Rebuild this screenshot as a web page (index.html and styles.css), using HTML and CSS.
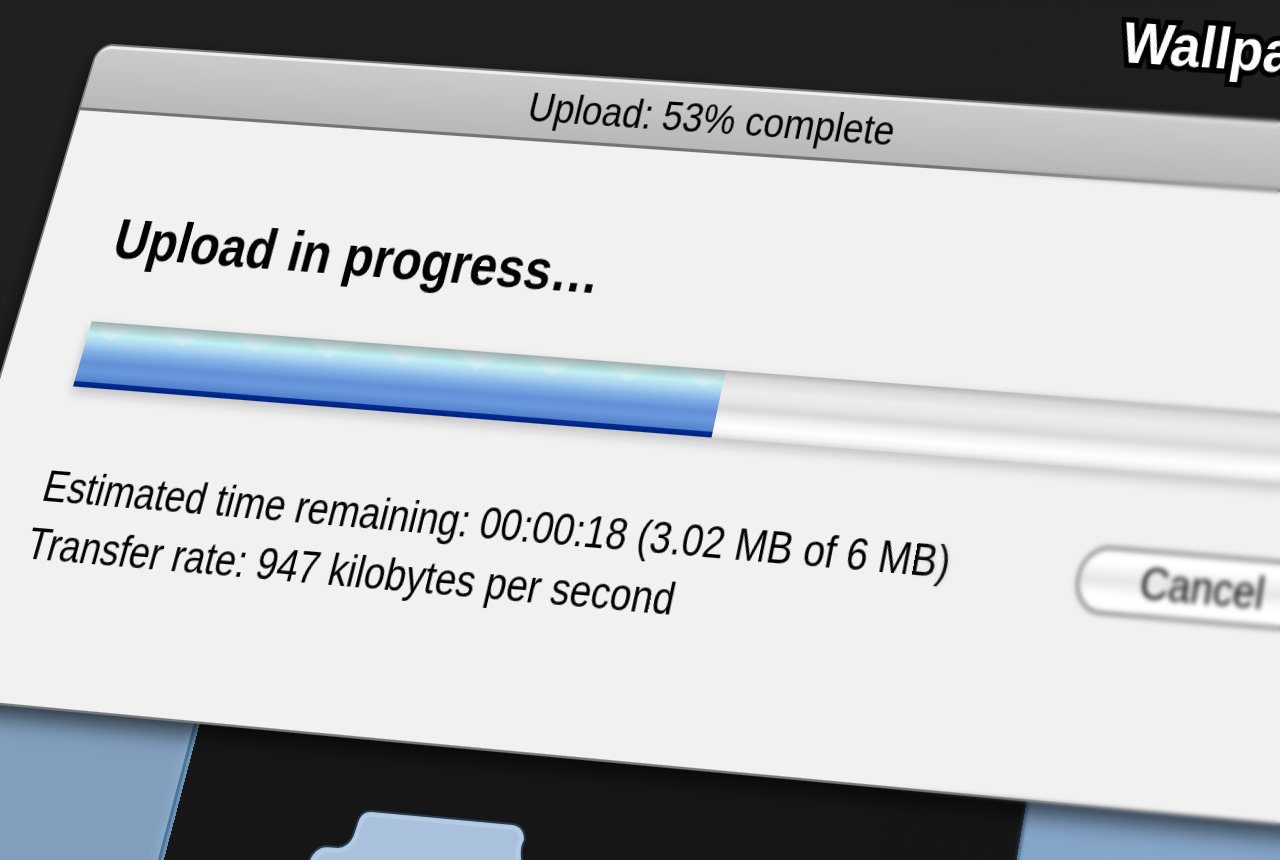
FILE: index.html
```
<!DOCTYPE html>
<html lang="en">
<head>
    <meta charset="UTF-8">
    <meta name="viewport" content="width=device-width, initial-scale=1.0">
    <title>Upload: 53% complete</title>
    <link rel="stylesheet" href="styles.css">
</head>
<body>
    <svg class="folder" viewBox="0 0 240 64" width="240" height="64" aria-hidden="true">
        <path class="folder-edge" d="M6 72 Q12 51 26 50 L38 51 Q48 50 53 39 L58 24 Q62 14 72 15 L213 28 Q225 30 225 44 Q219 54 224 72 Z"/>
        <path class="folder-shine" d="M11 72 Q17 55 28 54 L39 55 Q50 54 56 41 L61 26 Q65 18 73 19 L212 32 Q221 33 221 44 Q215 54 219 72"/>
    </svg>
    <div class="desktop">
        <div class="panel panel-left"></div>
        <div class="panel panel-right"></div>
        <div class="window">
            <div class="titlebar">Upload: 53% complete</div>
            <div class="content">
                <h1 id="heading">Upload in progress…</h1>
                <progress class="bar" value="53" max="100" aria-labelledby="heading"></progress>
                <div class="footer">
                    <div class="details">
                        <div>Estimated time remaining: 00:00:18 (3.02 MB of 6 MB)</div>
                        <div>Transfer rate: 947 kilobytes per second</div>
                    </div>
                    <button class="cancel" type="button">Cancel</button>
                </div>
            </div>
        </div>
    </div>
    <div class="lens"></div>
    <div class="desktop">
        <div class="label">Wallpaper</div>
    </div>
</body>
</html>
```
FILE: styles.css
```
* {
    box-sizing: border-box;
}

body {
    margin: 0;
    height: 100vh;
    overflow: hidden;
    position: relative;
    background: linear-gradient(#202020 30%, #161617 80%);
    font-family: "Liberation Sans", Arial, sans-serif;
    font-size: 39px;
    color: #000;
}

/* everything on the desktop lies on one tilted plane */
.desktop {
    position: absolute;
    top: 0;
    left: 0;
    width: 117vw;
    transform-origin: 0 0;
    transform: matrix3d(
        0.8777, 0.0561, 0, -0.0000374,
        -0.3105, 1.0028, 0, -0.0001182,
        0, 0, 1, 0,
        98, 43, 0, 1);
}

.window {
    position: relative;
    height: 602px;
    border: 2px solid #77787a;
    border-radius: 18px 18px 0 0;
    background: #f1f1f1;
    box-shadow: 0 8px 20px rgba(0, 0, 0, 0.7);
    overflow: hidden;
}

.titlebar {
    height: 64px;
    padding-right: 126px;
    line-height: 58px;
    text-align: center;
    background: linear-gradient(#cbcbcb, #b8b8b8);
    border-top: 3px solid #eee;
    border-bottom: 3px solid #747474;
    border-radius: 16px 16px 0 0;
}

.content {
    padding: 88px 88px 0 80px;
}

h1 {
    margin: 0;
    font-size: 52px;
    line-height: 60px;
}

.bar {
    display: block;
    width: calc(100% - 48px);
    height: 60px;
    margin-top: 48px;
    appearance: none;
    border: none;
    box-shadow: 0 5px 10px rgba(0, 0, 0, 0.2);
}

.bar::-webkit-progress-bar {
    background: linear-gradient(#b2b2b2, #d8d8d8 10%, #ececec 28%, #e8e8e8 42%, #d8d8d8 56%, #f0f0f0 68%, #fff 82%, #f4f4f4 92%, #dadada);
}

.bar::-webkit-progress-value {
    background:
        linear-gradient(rgba(150, 160, 160, 0.8), rgba(220, 230, 230, 0) 18%),
        conic-gradient(from -60deg at 50% 17px, rgba(225, 238, 242, 0.5) 120deg, transparent 0) -15px 0 / 79px 60px repeat-x,
        linear-gradient(#b4e2e0, #c2f0f3 20%, #acd4f0 32%, #84b3e5 45%, #648fd8 62%, #6a98dc 76%, #5380cb 91%, #012c92 92%, #00237f);
}

.footer {
    display: flex;
    justify-content: space-between;
    align-items: flex-start;
    padding-top: 64px;
}

.details {
    line-height: 51px;
    white-space: nowrap;
}

.cancel {
    width: 260px;
    height: 60px;
    padding: 0 10px 0 0;
    border: 5px solid #a8a8a8;
    border-radius: 30px;
    background: linear-gradient(#fff 20%, #e6e6e6 50%, #fff 75%);
    font: inherit;
    color: #111;
    filter: blur(1px);
}

.panel {
    position: absolute;
    top: 450px;
    height: 600px;
    background: #819fbd;
    border: 3px solid #6b93b8;
    box-shadow: inset 0 0 0 3px #4d7397, inset 0 0 12px 4px #90b3d2;
}

.panel-left {
    left: -400px;
    width: 710px;
}

.panel-right {
    left: 1138px;
    width: 600px;
    background: #86a6c9;
    border-color: #5f86ac;
    box-shadow: none;
}

.label {
    position: absolute;
    left: 1102px;
    top: -96px;
    font-size: 56px;
    line-height: 64px;
    font-weight: bold;
    color: #fff;
    -webkit-text-stroke: 10px #000;
    paint-order: stroke fill;
}

.folder {
    position: absolute;
    left: 300px;
    bottom: 0;
}

.folder-edge {
    fill: #a9c1dd;
    stroke: #26384c;
    stroke-width: 2;
}

.folder-shine {
    fill: none;
    stroke: #b4cbe2;
    stroke-width: 4;
}

/* the right side falls out of focus */
.lens {
    position: absolute;
    inset: 0;
    pointer-events: none;
    backdrop-filter: blur(2px);
    mask-image: linear-gradient(95deg, transparent 70%, #000 90%);
}
```
